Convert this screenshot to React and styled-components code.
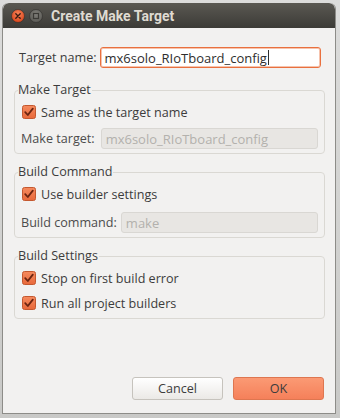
import React from 'react';
import styled, { createGlobalStyle } from 'styled-components';

const GlobalStyle = createGlobalStyle`
  html, body {
    margin: 0;
    padding: 0;
    background: #cfcfcd;
  }
  body {
    font-family: "Open Sans", "Noto Sans", sans-serif;
    font-size: 12.6px;
    color: #3c3c3c;
  }
`;

const Desk = styled.div`
  width: 340px;
  height: 418px;
  padding: 3px 0 0 2px;
  box-sizing: border-box;
  background: linear-gradient(#dcdcdb, #c9c9c7);
`;

const Window = styled.div`
  width: 334px;
  height: 411px;
  display: flex;
  flex-direction: column;
  border: 1px solid #8d8c88;
  border-top: none;
  border-radius: 6px 6px 0 0;
  box-sizing: border-box;
  overflow: hidden;
  background: #f2f1f0;
`;

const TitleBar = styled.div`
  height: 25px;
  flex: none;
  display: flex;
  align-items: center;
  padding-left: 8px;
  gap: 4px;
  background: linear-gradient(#5a5852, #3c3b37);
  border-radius: 6px 6px 0 0;
`;

const Title = styled.span`
  margin-left: 4px;
  font-family: Roboto, "Open Sans", sans-serif;
  font-weight: 700;
  font-size: 14px;
  color: #dfdbd2;
`;

const Body = styled.div`
  flex: 1;
  display: flex;
  flex-direction: column;
  padding: 19px 0 13px 0;
`;

const Row = styled.div`
  display: flex;
  align-items: center;
  gap: ${({ $gap }) => $gap || 6}px;
  padding-left: ${({ $indent }) => $indent || 0}px;
  padding-right: ${({ $right }) => $right || 0}px;
  margin-top: ${({ $top }) => $top || 0}px;
  height: ${({ $h }) => $h || 18}px;
`;

const Label = styled.span`
  white-space: nowrap;
  color: ${({ $muted }) => ($muted ? '#4c4c4c' : '#3c3c3c')};
`;

const Input = styled.div`
  flex: 1;
  box-sizing: border-box;
  height: 21px;
  display: flex;
  align-items: center;
  padding-left: 4px;
  border-radius: 3px;
  font-size: 13px;
  color: ${({ $disabled }) => ($disabled ? '#b3b1ad' : '#2e2e2e')};
  background: ${({ $disabled }) => ($disabled ? '#e8e6e3' : '#ffffff')};
  border: 1px solid ${({ $focus, $disabled }) => ($focus ? '#e9703e' : $disabled ? '#d9d7d3' : '#bdbab4')};
  box-shadow: ${({ $focus }) => ($focus ? 'inset 0 0 0 1px #f6c3ad' : 'none')};
`;

const Caret = styled.span`
  display: inline-block;
  width: 1px;
  height: 15px;
  background: #2e2e2e;
  margin-left: 1px;
`;

const Group = styled.fieldset`
  margin: ${({ $top }) => $top || 0}px 0 0 11px;
  width: 311px;
  box-sizing: border-box;
  border: 1px solid #dad8d3;
  border-radius: 4px;
  padding: 0 0 ${({ $bottom }) => $bottom || 4}px 0;
  display: flex;
  flex-direction: column;
`;

const Legend = styled.legend`
  padding: 0 1px 0 0;
  margin-left: 3px;
  line-height: 16px;
  font-size: 12.6px;
  color: #3c3c3c;
`;

const Buttons = styled.div`
  margin-top: auto;
  display: flex;
  justify-content: flex-end;
  gap: 10px;
  padding-right: 11px;
`;

const Button = styled.div`
  width: 91px;
  height: 23px;
  box-sizing: border-box;
  display: flex;
  align-items: center;
  justify-content: center;
  border-radius: 3px;
  font-size: 12.6px;
  color: #3c3c3c;
  border: 1px solid ${({ $primary }) => ($primary ? '#de7650' : '#c6c3bd')};
  background: ${({ $primary }) => ($primary
    ? 'linear-gradient(#fb9a74, #f5805a)'
    : 'linear-gradient(#ffffff, #ebe9e6)')};
`;

const WinButton = ({ close }) => (
  <svg width="14" height="14" viewBox="0 0 14 14">
    <defs>
      <radialGradient id={close ? 'wbc' : 'wbm'} cx="50%" cy="35%" r="65%">
        <stop offset="0" stopColor={close ? '#f7845a' : '#807f7a'} />
        <stop offset="1" stopColor={close ? '#d9441a' : '#5b5a55'} />
      </radialGradient>
    </defs>
    <circle cx="7" cy="7" r="6.5" fill={`url(#${close ? 'wbc' : 'wbm'})`} stroke="#2f2e2b" strokeWidth="0.6" />
    {close ? (
      <path d="M4.8 4.8 L9.2 9.2 M9.2 4.8 L4.8 9.2" stroke="#3b1a10" strokeWidth="1.4" strokeLinecap="round" />
    ) : (
      <rect x="4.5" y="4.5" width="5" height="5" fill="none" stroke="#3a3935" strokeWidth="1.2" />
    )}
  </svg>
);

const Check = () => (
  <svg width="14" height="14" viewBox="0 0 14 14" style={{ flex: 'none' }}>
    <defs>
      <linearGradient id="cb" x1="0" y1="0" x2="0" y2="1">
        <stop offset="0" stopColor="#f58a5e" />
        <stop offset="1" stopColor="#e8683a" />
      </linearGradient>
    </defs>
    <rect x="0.5" y="0.5" width="13" height="13" rx="2" fill="url(#cb)" stroke="#c4582f" />
    <path d="M3.2 7.2 L5.8 10 L10.8 3.6" fill="none" stroke="#6b2410" strokeWidth="1.8" strokeLinecap="round" strokeLinejoin="round" />
  </svg>
);

const CheckRow = ({ children, top }) => (
  <Row $indent={7} $gap={5} $top={top}>
    <Check />
    <Label>{children}</Label>
  </Row>
);

export default function App() {
  return (
    <>
      <GlobalStyle />
      <Desk>
        <Window>
          <TitleBar>
            <WinButton close />
            <WinButton />
            <Title>Create Make Target</Title>
          </TitleBar>
          <Body>
            <Row $indent={16} $gap={3} $h={21} $right={14}>
              <Label>Target name:</Label>
              <Input $focus>
                mx6solo_RIoTboard_config<Caret />
              </Input>
            </Row>

            <Group $top={14}>
              <Legend>Make Target</Legend>
              <CheckRow top={5}>Same as the target name</CheckRow>
              <Row $indent={6} $gap={6} $top={7} $h={21} $right={6}>
                <Label $muted>Make target:</Label>
                <Input $disabled>mx6solo_RIoTboard_config</Input>
              </Row>
            </Group>

            <Group $top={10}>
              <Legend>Build Command</Legend>
              <CheckRow top={5}>Use builder settings</CheckRow>
              <Row $indent={6} $gap={4} $top={9} $h={21} $right={6}>
                <Label $muted>Build command:</Label>
                <Input $disabled>make</Input>
              </Row>
            </Group>

            <Group $top={10} $bottom={6}>
              <Legend>Build Settings</Legend>
              <CheckRow top={5}>Stop on first build error</CheckRow>
              <CheckRow top={7}>Run all project builders</CheckRow>
            </Group>

            <Buttons>
              <Button>Cancel</Button>
              <Button $primary>OK</Button>
            </Buttons>
          </Body>
        </Window>
      </Desk>
    </>
  );
}
